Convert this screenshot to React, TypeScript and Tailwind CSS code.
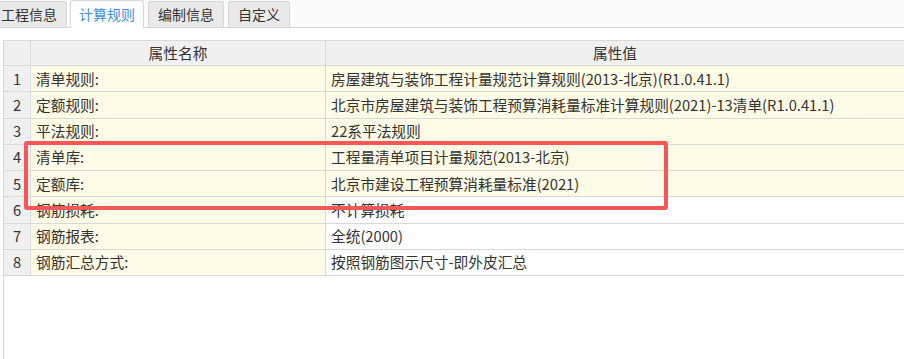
import React from 'react';

const rows = [
  { name: '清单规则:', value: '房屋建筑与装饰工程计量规范计算规则(2013-北京)(R1.0.41.1)', hl: true },
  { name: '定额规则:', value: '北京市房屋建筑与装饰工程预算消耗量标准计算规则(2021)-13清单(R1.0.41.1)', hl: true },
  { name: '平法规则:', value: '22系平法规则', hl: true },
  { name: '清单库:', value: '工程量清单项目计量规范(2013-北京)', hl: true },
  { name: '定额库:', value: '北京市建设工程预算消耗量标准(2021)', hl: true },
  { name: '钢筋损耗:', value: '不计算损耗', hl: false },
  { name: '钢筋报表:', value: '全统(2000)', hl: false },
  { name: '钢筋汇总方式:', value: '按照钢筋图示尺寸-即外皮汇总', hl: false },
];

const tabs = ['工程信息', '计算规则', '编制信息', '自定义'];

const App: React.FC = () => {
  return (
    <div
      className="relative w-[904px] h-[359px] overflow-hidden bg-white text-[14px] text-[#333]"
      style={{ fontFamily: '"Noto Sans CJK SC", "Microsoft YaHei", "Noto Sans", sans-serif' }}
    >
      {/* tab strip */}
      <div className="flex items-end h-[28px] border-b border-[#d6d6d6] bg-[#fbfbfb]">
        {tabs.map((t, i) =>
          i === 1 ? (
            <div
              key={t}
              className="h-[28px] mb-[-1px] ml-[3px] px-[8px] flex items-center bg-white border border-b-0 border-[#d6d6d6] rounded-t-[3px] text-[#3b8fe6]"
            >
              {t}
            </div>
          ) : (
            <div
              key={t}
              className={`h-[26px] px-[9px] flex items-center bg-[#e9e9e9] border border-b-0 border-[#d6d6d6] rounded-t-[3px] ${
                i === 0 ? 'ml-[-9px]' : 'ml-[4px]'
              }`}
            >
              {t}
            </div>
          )
        )}
      </div>

      {/* property table */}
      <div className="mt-[12px] ml-[3px] h-[320px] border-l border-t border-[#d9d9d9] text-[14.7px]">
        <div className="flex h-[25px] bg-[#f0f0f0] border-b border-[#d9d9d9]">
          <div className="w-[27px] border-r border-[#d9d9d9]" />
          <div className="w-[295px] border-r border-[#d9d9d9] flex items-center justify-center">属性名称</div>
          <div className="flex-1 flex items-center justify-center">属性值</div>
        </div>
        {rows.map((r, i) => (
          <div key={i} className="flex h-[26.25px] border-b border-[#d9d9d9]">
            <div className="w-[27px] bg-[#f0f0f0] border-r border-[#d9d9d9] flex items-center justify-center">
              {i + 1}
            </div>
            <div className="w-[295px] bg-[#fffbe6] border-r border-[#d9d9d9] flex items-center pl-[5px]">
              {r.name}
            </div>
            <div className={`flex-1 flex items-center pl-[5px] ${r.hl ? 'bg-[#fffbe6]' : 'bg-white'}`}>
              {r.value}
            </div>
          </div>
        ))}
      </div>

      {/* red highlight annotation */}
      <div className="absolute left-[24px] top-[141px] w-[644px] h-[69px] border-4 border-[#f55656] rounded-[3px]" />
    </div>
  );
};

export default App;
